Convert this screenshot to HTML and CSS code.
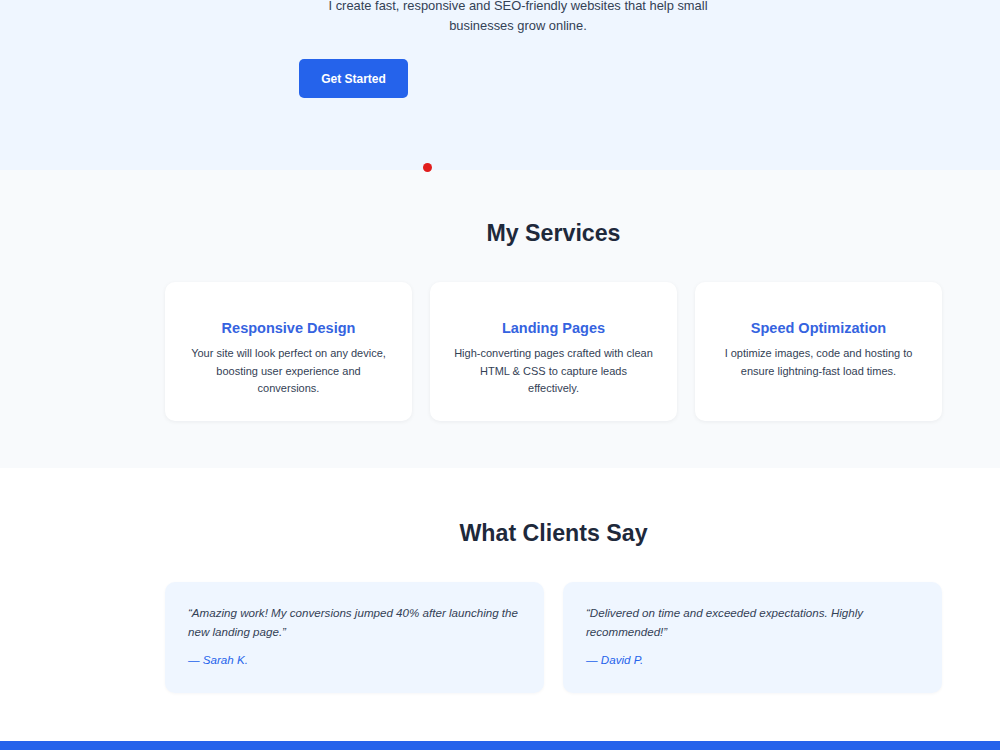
FILE: index.html
```html
<!DOCTYPE html>
<html lang="en">
<head>
    <meta charset="UTF-8">
    <meta name="viewport" content="width=device-width, initial-scale=1.0">
    <title>Web Design for Small Businesses</title>
    <link rel="stylesheet" href="styles.css">
</head>
<body>
    <header class="hero">
        <div class="hero-inner">
            <p class="hero-lead">I create fast, responsive and SEO-friendly websites that help small businesses grow online.</p>
            <a class="btn" href="#contact">Get Started</a>
        </div>
        <span class="dot" aria-hidden="true"></span>
    </header>

    <section class="services">
        <div class="container">
            <h2>My Services</h2>
            <ul class="cards" role="list">
                <li class="card">
                    <h3>Responsive Design</h3>
                    <p>Your site will look perfect on any device, boosting user experience and conversions.</p>
                </li>
                <li class="card">
                    <h3>Landing Pages</h3>
                    <p>High-converting pages crafted with clean HTML &amp; CSS to capture leads effectively.</p>
                </li>
                <li class="card">
                    <h3>Speed Optimization</h3>
                    <p>I optimize images, code and hosting to ensure lightning-fast load times.</p>
                </li>
            </ul>
        </div>
    </section>

    <section class="testimonials">
        <div class="container">
            <h2>What Clients Say</h2>
            <div class="quotes">
                <blockquote class="quote">
                    <p>“Amazing work! My conversions jumped 40% after launching the new landing page.”</p>
                    <cite>— Sarah K.</cite>
                </blockquote>
                <blockquote class="quote">
                    <p>“Delivered on time and exceeded expectations. Highly recommended!”</p>
                    <cite>— David P.</cite>
                </blockquote>
            </div>
        </div>
    </section>

    <footer class="footer" id="contact"></footer>
</body>
</html>
```

FILE: styles.css
```css
* {
    box-sizing: border-box;
}
body {
    margin: 0;
    font-family: "Liberation Sans", Arial, sans-serif;
    color: #1e293b;
    background: #fff;
}
.hero {
    display: flow-root;
    position: relative;
    background-color: #eff6ff;
    height: 170px;
}
.hero-inner {
    margin-left: 299px;
    width: 438px;
}
.hero-lead {
    margin: -4px 0 0;
    text-align: center;
    font-size: 12.9px;
    line-height: 20px;
    color: #334155;
}
.btn {
    display: inline-flex;
    align-items: center;
    justify-content: center;
    margin-top: 23px;
    width: 109px;
    height: 39px;
    border-radius: 5px;
    background-color: #2563eb;
    color: #fff;
    font-size: 12px;
    font-weight: bold;
    text-decoration: none;
}
.dot {
    position: absolute;
    left: 423px;
    top: 163px;
    width: 9px;
    height: 9px;
    border-radius: 50%;
    background-color: #e11d1d;
}
.container {
    margin-left: 165px;
    width: 777px;
}
h2 {
    margin: 0;
    text-align: center;
    font-size: 23.2px;
    font-weight: bold;
    color: #1e293b;
}
.services {
    background-color: #f8fafc;
    padding: 50px 0 47px;
}
.cards {
    list-style: none;
    margin: 35px 0 0;
    padding: 0;
    display: grid;
    grid-template-columns: repeat(3, 1fr);
    gap: 18px;
}
.card {
    background: #fff;
    border-radius: 10px;
    box-shadow: 0 1px 4px rgba(15, 23, 42, 0.06);
    padding: 38px 23.25px 22px;
    height: 139px;
    text-align: center;
}
.card h3 {
    margin: 0 0 9px;
    font-size: 14.5px;
    color: #3563e0;
}
.card p {
    margin: 0;
    font-size: 11px;
    line-height: 17.5px;
    color: #334155;
}
.testimonials {
    padding: 52px 0 48px;
}
.quotes {
    margin-top: 35px;
    display: grid;
    grid-template-columns: 1fr 1fr;
    gap: 19px;
}
.quote {
    margin: 0;
    background-color: #eff6ff;
    border-radius: 10px;
    box-shadow: 0 1px 3px rgba(15, 23, 42, 0.04);
    padding: 21px 23px 24px;
    height: 111px;
    font-style: italic;
    font-size: 11.6px;
    color: #334155;
}
.quote p {
    margin: 0;
    line-height: 19px;
}
.quote cite {
    display: block;
    margin-top: 12px;
    color: #2563eb;
}
.footer {
    background-color: #2563eb;
    height: 40px;
}
```
